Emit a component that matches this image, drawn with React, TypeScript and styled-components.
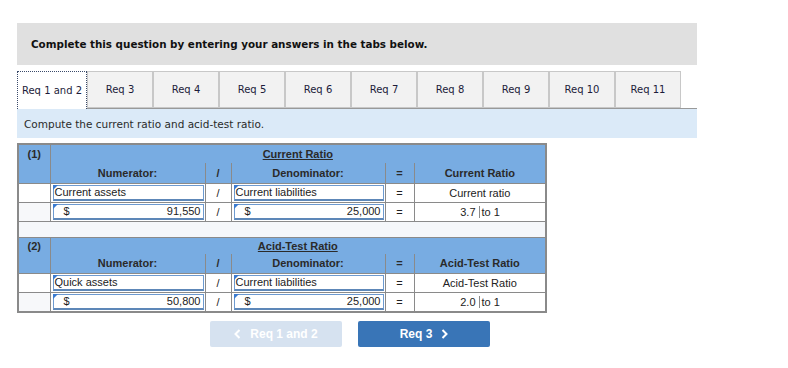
import { createGlobalStyle } from "styled-components";
import styled from "styled-components";

const GlobalStyle = createGlobalStyle`
  html, body {
    margin: 0;
    padding: 0;
    background: #ffffff;
  }
  body {
    font-family: "DejaVu Sans", Verdana, sans-serif;
    color: #222;
  }
`;

const Page = styled.div`
  width: 680px;
  padding-left: 17px;
`;

const Note = styled.div`
  margin: -10px 0 0 -2px;
  height: 13px;
  line-height: 13px;
  font-size: 10.4px;
  font-weight: bold;
  color: #c8102e;
  white-space: nowrap;
`;

const Banner = styled.div`
  margin-top: 20px;
  height: 42px;
  display: flex;
  align-items: center;
  padding-left: 14px;
  background: #e0e0e0;
  font-size: 10.35px;
  font-weight: bold;
  color: #111;
`;

const TabBar = styled.div`
  margin-top: 6px;
  display: flex;
  border-bottom: 1px solid #999;
  height: 37px;
`;

const Tab = styled.div<{ $active?: boolean }>`
  box-sizing: border-box;
  width: ${(p) => (p.$active ? "70px" : "66px")};
  height: ${(p) => (p.$active ? "38px" : "37px")};
  display: flex;
  align-items: center;
  justify-content: center;
  font-size: 10px;
  color: #1c1c3a;
  background: ${(p) => (p.$active ? "#ffffff" : "#f2f2f2")};
  border: ${(p) => (p.$active ? "1px dotted #3a4a6a" : "1px solid #c8c8c8")};
  border-bottom: ${(p) => (p.$active ? "none" : "1px solid #c8c8c8")};
  position: relative;
  z-index: ${(p) => (p.$active ? 1 : 0)};
`;

const Instruction = styled.div`
  height: 29px;
  display: flex;
  align-items: center;
  padding-left: 7px;
  background: #dbeaf8;
  font-size: 10.5px;
  color: #2a2a2a;
`;

const Table = styled.table`
  margin-top: 5px;
  border-collapse: collapse;
  table-layout: fixed;
  width: 529px;
  font-family: "Liberation Sans", Arial, sans-serif;
  font-size: 11px;
  color: #222;
  border: 2px solid #8a8a8a;
`;

const HeadCell = styled.td<{ $align?: string }>`
  background: #78ace2;
  border-left: 1px solid #8a8a8a;
  border-right: 1px solid #8a8a8a;
  padding: 0;
  font-weight: bold;
  text-align: ${(p) => p.$align || "center"};
  color: #2a2a2a;
`;

const TitleText = styled.span`
  text-decoration: underline;
`;

const Cell = styled.td<{ $bg?: string; $align?: string }>`
  border: 1px solid #8a8a8a;
  padding: 0;
  background: ${(p) => p.$bg || "#ffffff"};
  text-align: ${(p) => p.$align || "center"};
`;

const Row = styled.tr<{ $h: number }>`
  height: ${(p) => p.$h}px;
`;

const Spacer = styled.td`
  background: #f5f7fa;
  border: 1px solid #8a8a8a;
  padding: 0;
`;

const Input = styled.div<{ $money?: boolean }>`
  position: relative;
  box-sizing: border-box;
  margin: 1px 1px 1px 2px;
  height: 16px;
  display: flex;
  align-items: center;
  justify-content: ${(p) => (p.$money ? "space-between" : "flex-start")};
  padding: ${(p) => (p.$money ? "0 2px 0 10px" : "0 2px 0 1px")};
  background: #fff;
  border: 1px solid #6d9ad0;
  border-bottom: 2px solid #5d87b8;
  color: #222;
  text-align: left;

  &::before {
    content: "";
    position: absolute;
    left: -1px;
    top: -1px;
    border-top: 5px solid #3b7bd0;
    border-right: 5px solid transparent;
  }
`;

const RatioWrap = styled.div`
  display: grid;
  grid-template-columns: 65px 1fr;
  height: 100%;
`;

const RatioValue = styled.div`
  display: flex;
  align-items: center;
  justify-content: flex-end;
  padding-right: 3px;
  border-right: 1px solid #8a8a8a;
`;

const RatioUnit = styled.div`
  display: flex;
  align-items: center;
  padding-left: 2px;
`;

const Nav = styled.div`
  display: flex;
  gap: 16px;
  padding-left: 193px;
  margin-top: 8px;
`;

const NavButton = styled.button<{ $disabled?: boolean }>`
  width: 132px;
  height: 26px;
  border: none;
  border-radius: 2px;
  display: flex;
  align-items: center;
  justify-content: center;
  gap: 9px;
  font-family: "Liberation Sans", Arial, sans-serif;
  font-size: 12px;
  font-weight: bold;
  color: #ffffff;
  background: ${(p) => (p.$disabled ? "#d6e2f0" : "#3975b7")};
`;

const Chevron = ({ dir }: { dir: "left" | "right" }) => (
  <svg width="7" height="10" viewBox="0 0 7 10">
    <path
      d={dir === "left" ? "M5.5 1 L1.5 5 L5.5 9" : "M1.5 1 L5.5 5 L1.5 9"}
      fill="none"
      stroke="#fff"
      strokeWidth="2"
    />
  </svg>
);

const tabs = ["Req 3", "Req 4", "Req 5", "Req 6", "Req 7", "Req 8", "Req 9", "Req 10", "Req 11"];

interface BlockProps {
  num: string;
  title: string;
  numer: string;
  numerVal: string;
  result: string;
  resultLabel: string;
  ratio: string;
  heights: number[];
}

const Block = ({ num, title, numer, numerVal, result, resultLabel, ratio, heights }: BlockProps) => (
  <>
    <Row $h={heights[0]}>
      <HeadCell>{num}</HeadCell>
      <HeadCell colSpan={6}>
        <TitleText>{title}</TitleText>
      </HeadCell>
    </Row>
    <Row $h={heights[1]}>
      <HeadCell />
      <HeadCell>Numerator:</HeadCell>
      <HeadCell>/</HeadCell>
      <HeadCell>Denominator:</HeadCell>
      <HeadCell>=</HeadCell>
      <HeadCell colSpan={2}>{result}</HeadCell>
    </Row>
    <Row $h={heights[2]}>
      <Cell />
      <Cell>
        <Input>{numer}</Input>
      </Cell>
      <Cell>/</Cell>
      <Cell>
        <Input>Current liabilities</Input>
      </Cell>
      <Cell>=</Cell>
      <Cell colSpan={2}>{resultLabel}</Cell>
    </Row>
    <Row $h={heights[3]}>
      <Cell $bg="#f7f8fa" />
      <Cell>
        <Input $money>
          <span>$</span>
          <span>{numerVal}</span>
        </Input>
      </Cell>
      <Cell>/</Cell>
      <Cell>
        <Input $money>
          <span>$</span>
          <span>25,000</span>
        </Input>
      </Cell>
      <Cell>=</Cell>
      <Cell colSpan={2}>
        <RatioWrap>
          <RatioValue>{ratio}</RatioValue>
          <RatioUnit>to 1</RatioUnit>
        </RatioWrap>
      </Cell>
    </Row>
  </>
);

export default function App() {
  return (
    <>
      <GlobalStyle />
      <Page>
        <Note>Note: Do not round intermediate calculations.</Note>
        <Banner>Complete this question by entering your answers in the tabs below.</Banner>
        <TabBar>
          <Tab $active>Req 1 and 2</Tab>
          {tabs.map((t) => (
            <Tab key={t}>{t}</Tab>
          ))}
        </TabBar>
        <Instruction>Compute the current ratio and acid-test ratio.</Instruction>
        <Table>
          <colgroup>
            <col style={{ width: 32 }} />
            <col style={{ width: 155 }} />
            <col style={{ width: 26 }} />
            <col style={{ width: 154 }} />
            <col style={{ width: 29 }} />
            <col style={{ width: 66 }} />
            <col style={{ width: 66 }} />
          </colgroup>
          <tbody>
            <Block
              num="(1)"
              title="Current Ratio"
              numer="Current assets"
              numerVal="91,550"
              result="Current Ratio"
              resultLabel="Current ratio"
              ratio="3.7"
              heights={[19, 20, 19, 19]}
            />
            <Row $h={16}>
              <Spacer colSpan={7} />
            </Row>
            <Block
              num="(2)"
              title="Acid-Test Ratio"
              numer="Quick assets"
              numerVal="50,800"
              result="Acid-Test Ratio"
              resultLabel="Acid-Test Ratio"
              ratio="2.0"
              heights={[17, 19, 17, 18]}
            />
          </tbody>
        </Table>
        <Nav>
          <NavButton $disabled>
            <Chevron dir="left" />
            Req 1 and 2
          </NavButton>
          <NavButton>
            Req 3
            <Chevron dir="right" />
          </NavButton>
        </Nav>
      </Page>
    </>
  );
}
